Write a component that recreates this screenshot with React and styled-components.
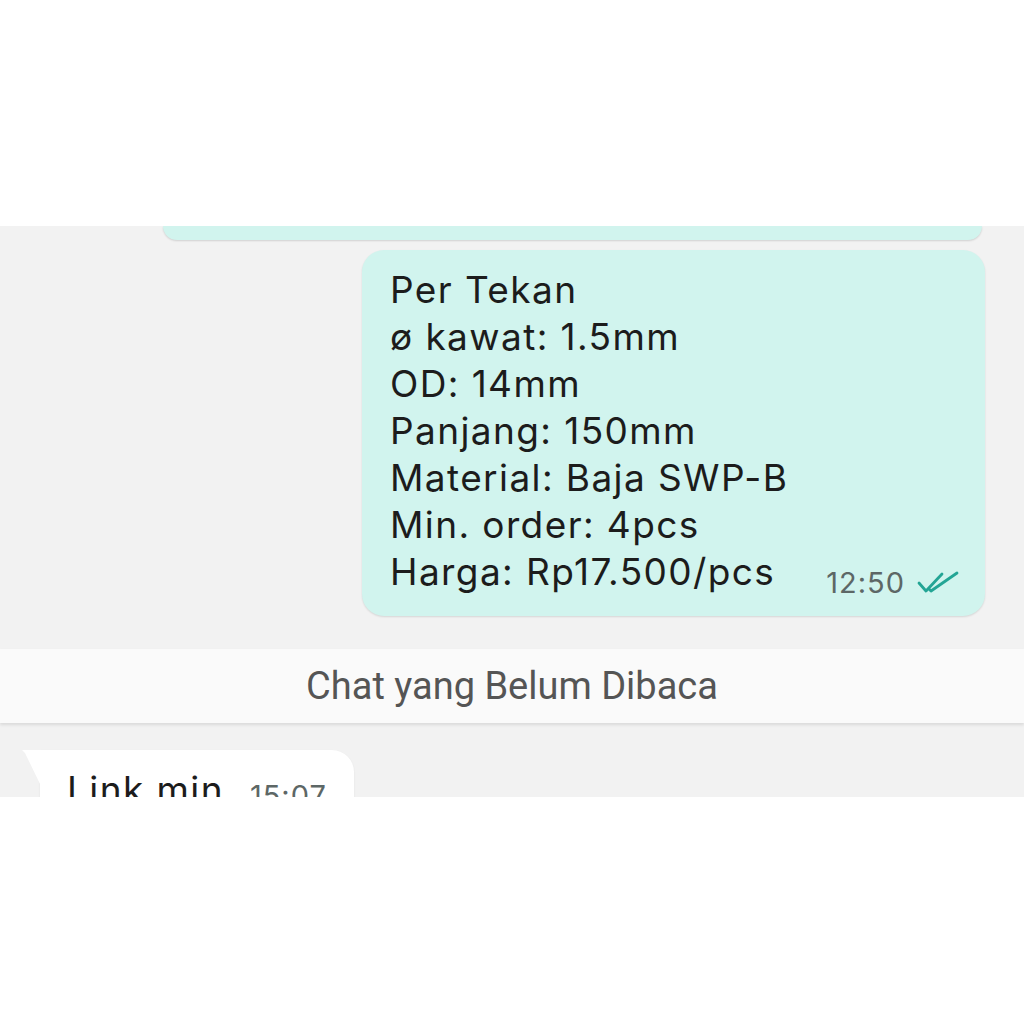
import styled, { createGlobalStyle } from "styled-components";

const GlobalStyle = createGlobalStyle`
  body {
    margin: 0;
    background: #ffffff;
    font-family: "Inter", "Noto Sans", sans-serif;
  }
`;

const TopSpace = styled.div`
  height: 226px;
  background: #ffffff;
`;

const ChatArea = styled.div`
  height: 571px;
  background: #f2f2f2;
  overflow: hidden;
  display: flex;
  flex-direction: column;

  & > * {
    flex-shrink: 0;
  }
`;

const PrevBubbleEnd = styled.div`
  height: 14px;
  margin: 0 42px 0 163px;
  background: #d1f4ee;
  border-radius: 0 0 22px 22px;
  box-shadow: 0 1px 2px rgba(0, 0, 0, 0.14);
`;

const OutBubble = styled.div`
  align-self: flex-end;
  width: 623px;
  box-sizing: border-box;
  margin: 10px 39px 0 0;
  padding: 16px 26px 21px 28px;
  background: #d1f4ee;
  border-radius: 22px;
  box-shadow: 0 1px 2px rgba(0, 0, 0, 0.12);
  display: flex;
  align-items: flex-end;
`;

const MessageText = styled.div`
  font-size: 37px;
  line-height: 47px;
  letter-spacing: 1.4px;
  color: #1c1c1c;
  white-space: pre-line;
`;

const Meta = styled.div`
  margin-left: auto;
  margin-bottom: -5px;
  display: flex;
  align-items: center;
  gap: 12px;
`;

const Time = styled.span`
  font-size: 29px;
  line-height: 34px;
  letter-spacing: 1px;
  color: #5d6766;
`;

const UnreadBanner = styled.div`
  margin-top: 33px;
  height: 74px;
  background: #fafafa;
  box-shadow: 0 2px 3px rgba(0, 0, 0, 0.1);
  display: flex;
  align-items: center;
  justify-content: center;
  font-family: "Roboto", "Inter", sans-serif;
  font-size: 38px;
  color: #555555;
`;

const InBubble = styled.div`
  position: relative;
  align-self: flex-start;
  width: 314px;
  box-sizing: border-box;
  margin: 27px 0 0 40px;
  padding: 16px 27px 16px 27px;
  background: #ffffff;
  border-radius: 0 22px 22px 22px;
  box-shadow: 0 1px 2px rgba(0, 0, 0, 0.08);
  display: flex;
  align-items: flex-end;
  gap: 26px;

  &::before {
    content: "";
    position: absolute;
    left: -18px;
    top: 0;
    width: 19px;
    height: 36px;
    background: #ffffff;
    clip-path: polygon(0 0, 100% 0, 100% 100%, 3px 3px);
  }
`;

function DoubleCheck() {
  return (
    <svg width="42" height="24" viewBox="0 0 42 24" fill="none">
      <path
        d="M2 12 L9 20 L25 3"
        stroke="#23a595"
        strokeWidth="2.8"
        strokeLinecap="round"
        strokeLinejoin="round"
      />
      <path
        d="M12 18 L14 20 L40 2"
        stroke="#23a595"
        strokeWidth="2.8"
        strokeLinecap="round"
        strokeLinejoin="round"
      />
    </svg>
  );
}

const orderText = `Per Tekan
ø kawat: 1.5mm
OD: 14mm
Panjang: 150mm
Material: Baja SWP-B
Min. order: 4pcs
Harga: Rp17.500/pcs`;

export default function App() {
  return (
    <>
      <GlobalStyle />
      <TopSpace />
      <ChatArea>
        <PrevBubbleEnd />
        <OutBubble>
          <MessageText>{orderText}</MessageText>
          <Meta>
            <Time>12:50</Time>
            <DoubleCheck />
          </Meta>
        </OutBubble>
        <UnreadBanner>Chat yang Belum Dibaca</UnreadBanner>
        <InBubble>
          <MessageText>Link min</MessageText>
          <Time>15:07</Time>
        </InBubble>
      </ChatArea>
    </>
  );
}
